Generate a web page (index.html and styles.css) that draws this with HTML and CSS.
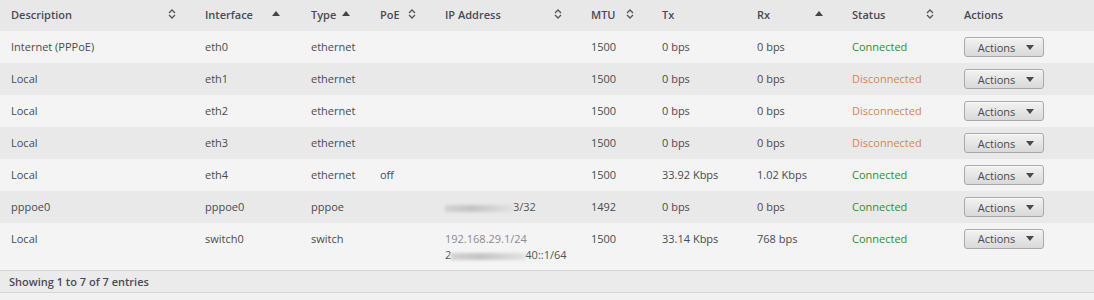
FILE: index.html
```html
<!DOCTYPE html>
<html>
<head>
<meta charset="utf-8">
<link rel="stylesheet" href="styles.css">
</head>
<body>
<div class="wrap">
<table class="grid">
  <colgroup>
    <col class="c-desc"><col class="c-if"><col class="c-type"><col class="c-poe"><col class="c-ip"><col class="c-mtu"><col class="c-tx"><col class="c-rx"><col class="c-status"><col class="c-act">
  </colgroup>
  <thead>
    <tr>
      <th class="first"><div class="th pr19"><span>Description</span><svg class="sort" viewBox="0 0 8 10"><path d="M1 4 L4 1 L7 4 M1 6 L4 9 L7 6" fill="none" stroke="#555" stroke-width="1.3"/></svg></div></th>
      <th><div class="th pr21"><span>Interface</span><svg class="asc" viewBox="0 0 8 5"><path d="M0 5 L4 0 L8 5 Z" fill="#444"/></svg></div></th>
      <th><div class="th pr20"><span>Type</span><svg class="asc" viewBox="0 0 8 5"><path d="M0 5 L4 0 L8 5 Z" fill="#444"/></svg></div></th>
      <th><div class="th pr19"><span>PoE</span><svg class="sort" viewBox="0 0 8 10"><path d="M1 4 L4 1 L7 4 M1 6 L4 9 L7 6" fill="none" stroke="#555" stroke-width="1.3"/></svg></div></th>
      <th><div class="th pr19"><span>IP Address</span><svg class="sort" viewBox="0 0 8 10"><path d="M1 4 L4 1 L7 4 M1 6 L4 9 L7 6" fill="none" stroke="#555" stroke-width="1.3"/></svg></div></th>
      <th><div class="th pr18"><span>MTU</span><svg class="sort" viewBox="0 0 8 10"><path d="M1 4 L4 1 L7 4 M1 6 L4 9 L7 6" fill="none" stroke="#555" stroke-width="1.3"/></svg></div></th>
      <th><div class="th"><span>Tx</span></div></th>
      <th><div class="th pr19"><span>Rx</span><svg class="asc" viewBox="0 0 8 5"><path d="M0 5 L4 0 L8 5 Z" fill="#444"/></svg></div></th>
      <th><div class="th pr20"><span>Status</span><svg class="sort" viewBox="0 0 8 10"><path d="M1 4 L4 1 L7 4 M1 6 L4 9 L7 6" fill="none" stroke="#555" stroke-width="1.3"/></svg></div></th>
      <th><div class="th"><span>Actions</span></div></th>
    </tr>
  </thead>
  <tbody>
    <tr class="odd">
      <td class="first">Internet (PPPoE)</td><td>eth0</td><td>ethernet</td><td></td><td></td><td>1500</td><td>0 bps</td><td>0 bps</td><td class="ok">Connected</td>
      <td><button class="btn">Actions<span class="caret"></span></button></td>
    </tr>
    <tr class="even">
      <td class="first">Local</td><td>eth1</td><td>ethernet</td><td></td><td></td><td>1500</td><td>0 bps</td><td>0 bps</td><td class="bad">Disconnected</td>
      <td><button class="btn">Actions<span class="caret"></span></button></td>
    </tr>
    <tr class="odd">
      <td class="first">Local</td><td>eth2</td><td>ethernet</td><td></td><td></td><td>1500</td><td>0 bps</td><td>0 bps</td><td class="bad">Disconnected</td>
      <td><button class="btn">Actions<span class="caret"></span></button></td>
    </tr>
    <tr class="even">
      <td class="first">Local</td><td>eth3</td><td>ethernet</td><td></td><td></td><td>1500</td><td>0 bps</td><td>0 bps</td><td class="bad">Disconnected</td>
      <td><button class="btn">Actions<span class="caret"></span></button></td>
    </tr>
    <tr class="odd">
      <td class="first">Local</td><td>eth4</td><td>ethernet</td><td>off</td><td></td><td>1500</td><td>33.92 Kbps</td><td>1.02 Kbps</td><td class="ok">Connected</td>
      <td><button class="btn">Actions<span class="caret"></span></button></td>
    </tr>
    <tr class="even">
      <td class="first">pppoe0</td><td>pppoe0</td><td>pppoe</td><td></td><td class="ip"><span class="blur w68"></span>3/32</td><td>1492</td><td>0 bps</td><td>0 bps</td><td class="ok">Connected</td>
      <td><button class="btn">Actions<span class="caret"></span></button></td>
    </tr>
    <tr class="odd tall">
      <td class="first">Local</td><td>switch0</td><td>switch</td><td></td>
      <td class="ip"><div class="soft">192.168.29.1/24</div><div>2<span class="blur w74"></span>40::1/64</div></td>
      <td>1500</td><td>33.14 Kbps</td><td>768 bps</td><td class="ok">Connected</td>
      <td><button class="btn">Actions<span class="caret"></span></button></td>
    </tr>
  </tbody>
</table>
<div class="footer"><span>Showing 1 to 7 of 7 entries</span></div>
</div>
</body>
</html>
```

FILE: styles.css
```css
html, body {
  margin: 0;
  padding: 0;
  background: #f1f1f1;
}
body {
  font-family: "Open Sans", "Liberation Sans", sans-serif;
  font-size: 11px;
  color: #4a4a52;
}
.wrap {
  width: 1094px;
}
.grid {
  width: 1094px;
  border-collapse: collapse;
  table-layout: fixed;
}
.c-desc { width: 195px; }
.c-if { width: 106px; }
.c-type { width: 69px; }
.c-poe { width: 65px; }
.c-ip { width: 146px; }
.c-mtu { width: 71px; }
.c-tx { width: 95px; }
.c-rx { width: 95px; }
.c-status { width: 112px; }
.c-act { width: 140px; }

thead tr {
  background: #e8e8e8;
  height: 31px;
}
th {
  padding: 0 0 0 10px;
  font-weight: 600;
  text-align: left;
  color: #4a4a55;
}
th.first { padding-left: 11px; }
.th {
  display: flex;
  align-items: center;
  justify-content: space-between;
  padding-bottom: 3px;
}
.pr18 { padding-right: 18px; }
.pr19 { padding-right: 19px; }
.pr20 { padding-right: 20px; }
.pr21 { padding-right: 21px; }
.sort { width: 8px; height: 10px; display: block; flex-shrink: 0; }
.asc { width: 8px; height: 5px; display: block; margin-top: -1px; flex-shrink: 0; }

tbody tr { height: 32px; }
tbody tr.odd { background: #f4f4f4; }
tbody tr.even { background: #e9e9e9; }
td {
  padding: 0 0 0 10px;
  line-height: 16px;
  white-space: nowrap;
  vertical-align: middle;
}
td.first { padding-left: 11px; }
tr.tall td {
  vertical-align: top;
  padding-top: 8px;
  padding-bottom: 7px;
}
tr.tall td .btn { margin-top: -3px; }
tr.tall { border-bottom: 1px solid #d6d6d6; }
.ok { color: #2f8f2f; }
.bad { color: #e0824f; }

.ip { color: #555; }
.soft { color: #8a8a90; }
.blur {
  display: inline-block;
  background: linear-gradient(90deg, #d2d2d2, #c4c4c4 40%, #d8d8d8 80%, #e2e2e2);
  height: 7px;
  vertical-align: -1px;
  filter: blur(1.4px);
}
.w68 { width: 68px; }
.w74 { width: 74px; }

.btn {
  display: inline-flex;
  align-items: center;
  justify-content: center;
  gap: 11px;
  width: 80px;
  height: 20px;
  padding: 0 0 0 4px;
  margin: 0;
  border: 1px solid #a9a9a9;
  border-radius: 3px;
  background: linear-gradient(#f2f2f2, #d9d9d9);
  font-family: "Open Sans", "Liberation Sans", sans-serif;
  font-size: 11px;
  color: #4a4a55;
  box-shadow: inset 0 1px 0 #fafafa;
}
.caret {
  width: 0;
  height: 0;
  border-left: 4px solid transparent;
  border-right: 4px solid transparent;
  border-top: 5px solid #4a4a4a;
}

.footer {
  height: 21px;
  background: #ebebeb;
  border-bottom: 1px solid #d6d6d6;
  display: flex;
  align-items: center;
  padding-left: 9px;
  font-weight: 600;
  color: #4a4a55;
}
```
